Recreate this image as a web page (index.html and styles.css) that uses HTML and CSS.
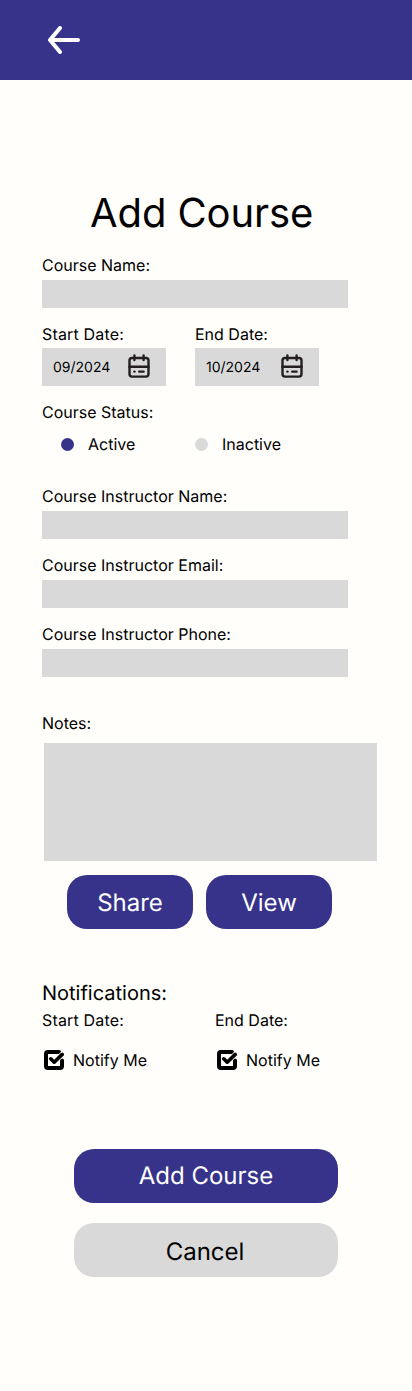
FILE: index.html
```html
<!DOCTYPE html>
<html lang="en">
<head>
<meta charset="utf-8">
<title>Add Course</title>
<link rel="stylesheet" href="styles.css">
</head>
<body>
<svg class="symbols" aria-hidden="true">
  <symbol id="calendar" viewBox="0 0 24 26">
    <g fill="none" stroke="#231f20" stroke-width="2.4" stroke-linecap="round" stroke-linejoin="round">
      <rect x="2.5" y="5" width="19" height="18.6" rx="2.5"/>
      <path d="M2.5 13.7h19M7.4 2.4v4.6M16.6 2.4v4.6M12.2 18.6h4.4"/>
      <path d="M7.4 18.6h.1"/>
    </g>
  </symbol>
  <symbol id="checked" viewBox="0 0 20 20">
    <path d="M15 2H4a2 2 0 0 0-2 2v12a2 2 0 0 0 2 2h12a2 2 0 0 0 2-2V10.5" fill="none" stroke="#000" stroke-width="4" stroke-linecap="round"/>
    <path d="M10.2 12.2L19 3.4" fill="none" stroke="#fffefb" stroke-width="5"/>
    <path d="M6.8 8.8l3.4 3.4L18.2 4.4" fill="none" stroke="#000" stroke-width="3.6" stroke-linecap="round" stroke-linejoin="round"/>
  </symbol>
</svg>
<header class="topbar">
  <svg class="back" viewBox="0 0 32 28" aria-label="Back">
    <path d="M12 2L2 14l10 12M2 14h28" fill="none" stroke="#fff" stroke-width="4" stroke-linecap="round" stroke-linejoin="round"/>
  </svg>
</header>
<main class="page">
  <h1 class="title">Add Course</h1>
  <section class="field">
    <div class="label">Course Name:</div>
    <div class="input"></div>
  </section>
  <section class="dates">
    <div class="date-field">
      <div class="label start">Start Date:</div>
      <div class="date"><span class="date-value">09/2024</span><svg class="calendar"><use href="#calendar"/></svg></div>
    </div>
    <div class="date-field">
      <div class="label">End Date:</div>
      <div class="date"><span class="date-value">10/2024</span><svg class="calendar"><use href="#calendar"/></svg></div>
    </div>
  </section>
  <section class="status">
    <div class="label">Course Status:</div>
    <div class="options">
      <div class="option"><span class="dot selected"></span>Active</div>
      <div class="option"><span class="dot"></span>Inactive</div>
    </div>
  </section>
  <section class="instructor">
    <div class="field">
      <div class="label">Course Instructor Name:</div>
      <div class="input"></div>
    </div>
    <div class="field">
      <div class="label">Course Instructor Email:</div>
      <div class="input"></div>
    </div>
    <div class="field">
      <div class="label">Course Instructor Phone:</div>
      <div class="input"></div>
    </div>
  </section>
  <section class="notes">
    <div class="label">Notes:</div>
    <div class="notes-box"></div>
    <div class="note-actions">
      <div class="button">Share</div>
      <div class="button">View</div>
    </div>
  </section>
  <section class="notifications">
    <h2 class="subtitle">Notifications:</h2>
    <div class="alerts">
      <div class="alert">
        <div class="label start">Start Date:</div>
        <div class="notify"><svg class="check"><use href="#checked"/></svg>Notify Me</div>
      </div>
      <div class="alert">
        <div class="label">End Date:</div>
        <div class="notify"><svg class="check"><use href="#checked"/></svg>Notify Me</div>
      </div>
    </div>
  </section>
  <section class="actions">
    <div class="button submit">Add Course</div>
    <div class="button cancel">Cancel</div>
  </section>
</main>
</body>
</html>
```
FILE: styles.css
```css
* { box-sizing: border-box; }
body {
  margin: 0;
  min-height: 1391px;
  background: #fffefb;
  color: #000;
  font: 16px/19px Inter, sans-serif;
  text-rendering: geometricPrecision;
}
.symbols { display: none; }
.topbar {
  height: 80px;
  padding: 26px 48px;
  background: #37338b;
}
.back { display: block; width: 32px; height: 28px; }
.page { padding: 109px 35px 0 42px; }
.title {
  margin: 0;
  padding-left: 48px;
  font-size: 40px;
  font-weight: 400;
  line-height: 48px;
  letter-spacing: -0.1px;
}
.title + .field { margin-top: 19px; }
.label.start { letter-spacing: 0.17px; }
.input { width: 306px; height: 28px; margin-top: 5px; background: #d9d9d9; }
.dates { display: flex; gap: 29px; margin-top: 17px; }
.date {
  display: flex;
  align-items: center;
  justify-content: space-between;
  width: 124px;
  height: 38px;
  margin-top: 4px;
  padding: 0 15px 2px 11px;
  background: #d9d9d9;
  font-size: 14px;
  line-height: 17px;
}
.date-value { padding-top: 2px; }
.calendar { width: 24px; height: 26px; }
.status { margin-top: 17px; }
.options { display: flex; margin-top: 13px; padding-left: 19px; }
.option { display: flex; align-items: center; gap: 14px; width: 134px; }
.dot { width: 13px; height: 13px; border-radius: 50%; background: #d9d9d9; }
.dot.selected { background: #37338b; }
.instructor { display: grid; gap: 17px; margin-top: 33px; }
.notes { margin-top: 37px; }
.notes-box { height: 118px; margin: 10px 0 0 2px; background: #d9d9d9; }
.note-actions { display: flex; gap: 13px; margin-top: 14px; padding-left: 25px; }
.button {
  display: flex;
  align-items: center;
  justify-content: center;
  width: 126px;
  height: 54px;
  border-radius: 20px;
  background: #37338b;
  color: #fff;
  font-size: 24px;
  line-height: 29px;
}
.notifications { margin-top: 52px; }
.subtitle { margin: 0; font-size: 20px; font-weight: 400; line-height: 24px; }
.alerts { display: grid; grid-template-columns: 173px 1fr; margin-top: 6px; }
.notify { display: flex; align-items: center; gap: 9px; margin-top: 20px; padding-left: 2px; }
.check { width: 20px; height: 20px; }
.actions { display: grid; gap: 20px; margin-top: 79px; padding-left: 32px; }
.actions .button { width: 264px; }
.actions .submit { padding-bottom: 2px; }
.actions .cancel { padding: 3px 2px 0 0; background: #d9d9d9; color: #000; }
```
